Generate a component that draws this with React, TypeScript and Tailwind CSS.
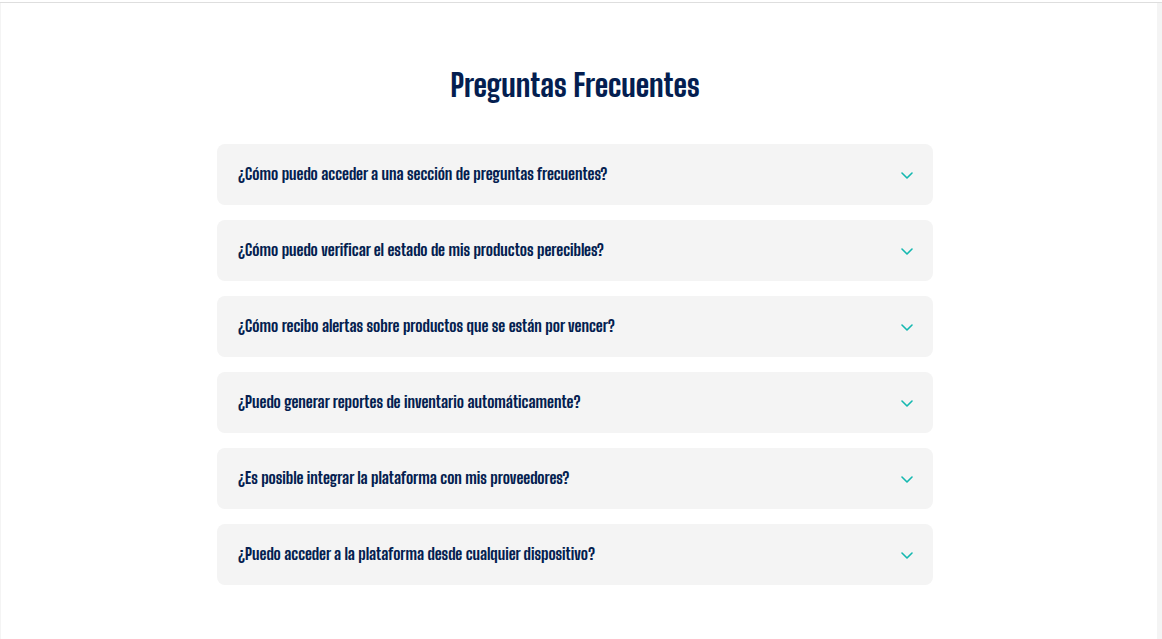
import { useState } from "react";

const faqs = [
  {
    question: "¿Cómo puedo acceder a una sección de preguntas frecuentes?",
    answer: "Desde el menú principal, en la opción Preguntas Frecuentes.",
  },
  {
    question: "¿Cómo puedo verificar el estado de mis productos perecibles?",
    answer: "En el panel de inventario, junto a cada producto.",
  },
  {
    question: "¿Cómo recibo alertas sobre productos que se están por vencer?",
    answer: "Activa las notificaciones en la configuración de tu cuenta.",
  },
  {
    question: "¿Puedo generar reportes de inventario automáticamente?",
    answer: "Sí, puedes programarlos desde la sección de reportes.",
  },
  {
    question: "¿Es posible integrar la plataforma con mis proveedores?",
    answer: "Sí, desde la sección de integraciones.",
  },
  {
    question: "¿Puedo acceder a la plataforma desde cualquier dispositivo?",
    answer: "Sí, solo necesitas un navegador con conexión a internet.",
  },
];

function Chevron({ open }: { open: boolean }) {
  return (
    <svg
      viewBox="0 0 12 8"
      className={open ? "h-2 w-3 shrink-0 rotate-180" : "h-2 w-3 shrink-0"}
      fill="none"
      stroke="#14b8b0"
      strokeWidth="1.6"
      strokeLinecap="round"
      strokeLinejoin="round"
      aria-hidden="true"
    >
      <path d="M1 2 6 7 11 2" />
    </svg>
  );
}

export default function App() {
  const [openIndex, setOpenIndex] = useState<number | null>(null);

  return (
    <div className="flex min-h-screen flex-col bg-white pt-0.5 font-['Big_Shoulders_Display','Big_Shoulders_Text','Liberation_Sans_Narrow','Liberation_Sans',sans-serif] text-[#041e50]">
      <main className="flex grow border-t border-t-[#dedede]">
        <section className="grow border-r-5 border-l border-r-[#f4f4f4] border-l-[#f4f4f4] pt-15 pr-2 pb-12">
          <h1 className="text-center text-[31px] leading-11 font-extrabold">Preguntas Frecuentes</h1>
          <div className="mx-auto mt-[37px] flex max-w-[716px] flex-col gap-[15px]">
            {faqs.map(({ question, answer }, index) => {
              const open = openIndex === index;
              return (
                <div key={question} className="rounded-lg bg-[#f4f4f4]">
                  <h2>
                    <button
                      type="button"
                      aria-expanded={open}
                      onClick={() => setOpenIndex(open ? null : index)}
                      className="flex min-h-[61px] w-full cursor-pointer items-center justify-between gap-4 pr-5 pl-[21px] text-left text-base leading-6 font-extrabold"
                    >
                      <span className="pb-0.5">{question}</span>
                      <Chevron open={open} />
                    </button>
                  </h2>
                  {open && <p className="px-5 pb-5 text-base">{answer}</p>}
                </div>
              );
            })}
          </div>
        </section>
      </main>
    </div>
  );
}
